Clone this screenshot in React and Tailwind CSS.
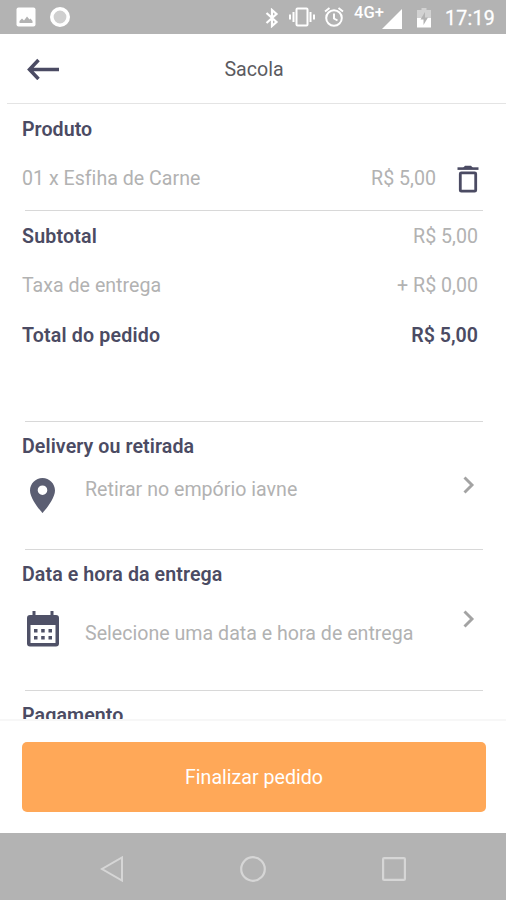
import React from 'react';

const StatusBar = () => (
  <div className="flex h-[34px] shrink-0 items-center justify-between bg-[#b3b3b3] pl-[16px] pr-[11px] text-white">
    <div className="flex items-center gap-[14px]">
      <svg className="h-5 w-5" viewBox="0 0 20 20">
        <rect x="0.5" y="0.5" width="19" height="19" rx="2" fill="#fff" />
        <path d="M3.500 16v-2l2.500-2.500 2 2 3-4 2.500 3 1-1 2 2.500v2z" fill="#b3b3b3" />
      </svg>
      <svg className="h-5 w-5" viewBox="0 0 20 20">
        <circle cx="10" cy="10" r="8.200" fill="#cfcfcf" stroke="#fff" strokeWidth="3.600" />
      </svg>
    </div>

    <div className="flex h-full items-center">
      {/* Bluetooth */}
      <svg className="mt-[2px] h-5 w-[14px]" viewBox="0 0 14 20" fill="none" stroke="#fff" strokeWidth="2.200">
        <path d="M1.500 5l10 9-4.500 4V2l4.500 4-10 9" />
      </svg>
      {/* Vibrate */}
      <svg className="ml-[10px] h-5 w-[26px]" viewBox="0 0 26 20" fill="none" stroke="#fff" strokeWidth="2">
        <rect x="7.500" y="1.500" width="11" height="17" rx="1" />
        <path d="M4.500 5v10M1 7.500v5M21.500 5v10M25 7.500v5" />
      </svg>
      {/* Alarm */}
      <svg className="ml-[9px] h-5 w-5" viewBox="0 0 20 20" fill="none" stroke="#fff" strokeWidth="2">
        <circle cx="10" cy="11" r="7.800" />
        <path d="M10 6.500v5l3.500 2M1 4.500L5.500 1M19 4.500L14.500 1" strokeWidth="1.900" />
      </svg>
      <span className="ml-[10px] w-[28px] self-start pt-[2.500px] text-[16.500px] font-medium leading-[20px]">4G+</span>
      {/* Signal */}
      <svg className="mt-[3px] h-5 w-5" viewBox="0 0 20 20">
        <path d="M20 0v20H0z" fill="#fff" />
      </svg>
      {/* Battery */}
      <svg className="ml-[15px] mt-[2px] h-5 w-[14px]" viewBox="0 0 14 20">
        <path d="M4.500 0h5v2H14v8H0V2h4.500z" fill="#d2d2d2" />
        <path d="M0 10h14v9.500H0z" fill="#fff" />
        <path d="M8 4l-4.500 7.500h3V17L11 9.500H8z" fill="#b3b3b3" />
      </svg>
      <span className="ml-[14px] mt-[3px] w-[50px] whitespace-nowrap text-[19.500px] tracking-[0.3px] [-webkit-text-stroke:0.3px_white]">
        17:19
      </span>
    </div>
  </div>
);

const Chevron = () => (
  <svg className="h-[18px] w-[12px]" viewBox="0 0 12 18" fill="none" stroke="#a3a3a3" strokeWidth="2.900">
    <path d="M1.500 1.500L9 9l-7.500 7.500" />
  </svg>
);

const Divider = () => <div className="ml-[25px] mr-[23px] h-px bg-[#d8d8d8]" />;

const Title = ({ children }) => (
  <h2 className="flex h-12 items-center px-[22px] pt-px font-semibold tracking-[0.09px] text-[#4b4b63]">{children}</h2>
);

const App = () => {
  return (
    <div className="flex h-[900px] w-[506px] flex-col overflow-hidden bg-white font-['Roboto',sans-serif] text-[19.600px] leading-[24px] tracking-[0.01px] text-[#b2b2b2] [font-variant-ligatures:none]">
      <StatusBar />

      <header className="grid h-[69px] shrink-0 grid-cols-[1fr_auto_1fr] items-center pl-[27px] pr-[25px] pt-px">
        <svg className="h-[22px] w-[32px]" viewBox="0 0 32 22" fill="none" stroke="#4b4b63" strokeWidth="3.500">
          <path d="M2.500 11.500H32M11.500 2L2.500 11.500l9 9.500" />
        </svg>
        <h1 className="pt-[2px] text-[#5b5b5f]">Sacola</h1>
      </header>
      <div className="ml-[7px] h-px shrink-0 bg-[#e4e4e4]" />

      <main className="h-[615px] shrink-0 overflow-hidden">
        <h2 className="flex h-[50px] items-center px-[22px] pt-px font-semibold tracking-[0.05px] text-[#4b4b63]">
          Produto
        </h2>
        <div className="flex h-[56px] items-center pb-[7px] pl-[22px] pr-[27px]">
          <span className="pt-px">01 x Esfiha de Carne</span>
          <span className="ml-auto pt-px">R$ 5,00</span>
          <svg className="ml-[21px] h-[28px] w-[22px]" viewBox="0 0 22 28" fill="none" stroke="#4b4b63">
            <path d="M0.500 3.600h21" strokeWidth="2.600" />
            <path d="M6 3L8 0.800h6L16 3z" fill="#4b4b63" stroke="none" />
            <rect x="3.300" y="7.800" width="15.400" height="18.400" rx="1" strokeWidth="2.800" />
          </svg>
        </div>
        <Divider />

        <div className="flex h-[50px] items-center justify-between pl-[22px] pr-[28px] pt-px">
          <span className="font-semibold tracking-[0.18px] text-[#4b4b63]">Subtotal</span>
          <span>R$ 5,00</span>
        </div>
        <div className="flex h-[49px] items-center justify-between pl-[22px] pr-[28px] pt-px">
          <span>Taxa de entrega</span>
          <span>+ R$ 0,00</span>
        </div>
        <div className="mb-[61px] flex h-[50px] items-center justify-between pl-[22px] pr-[28px] pt-px font-semibold text-[#4b4b63]">
          <span className="tracking-[0.18px]">Total do pedido</span>
          <span>R$ 5,00</span>
        </div>
        <Divider />

        <Title>Delivery ou retirada</Title>
        <div className="flex h-[79px] items-start pl-[30px] pr-[31px]">
          <svg className="mt-[8px] h-[35px] w-[25px]" viewBox="0 0 25 35">
            <path
              d="M12.500 0C5.600 0 0 5.600 0 12.500 0 21.500 12.500 35 12.500 35S25 21.500 25 12.500C25 5.600 19.400 0 12.500 0zm0 17a4.800 4.800 0 1 1 0-9.600 4.800 4.800 0 0 1 0 9.600z"
              fill="#5b5e72"
            />
          </svg>
          <span className="ml-[30px] mt-[8px]">Retirar no empório iavne</span>
          <div className="ml-auto mt-[6px]">
            <Chevron />
          </div>
        </div>
        <Divider />

        <Title>Data e hora da entrega</Title>
        <div className="flex h-[92px] items-start pl-[27px] pr-[31px]">
          <svg className="mt-[13px] h-[36px] w-[32px]" viewBox="0 0 32 36" fill="#4f5167">
            <path d="M5.500 0h3v4h15V0h3v4H29q3 0 3 3v25.500q0 3-3 3H3q-3 0-3-3V7q0-3 3-3h2.500zM3.500 14v18h25V14z" fillRule="evenodd" />
            <path d="M7 18h3.500v3.500H7zM14.200 18h3.500v3.500h-3.500zM21.500 18H25v3.500h-3.500zM7 25h3.500v3.500H7zM14.200 25h3.500v3.500h-3.500zM21.500 25H25v3.500h-3.500z" />
          </svg>
          <span className="ml-[26px] mt-[24px]">Selecione uma data e hora de entrega</span>
          <div className="ml-auto mt-[12px]">
            <Chevron />
          </div>
        </div>
        <Divider />

        <Title>Pagamento</Title>
      </main>

      <footer className="h-[114px] shrink-0 border-t-2 border-[#f7f7f7] px-[21px] pt-[21px]">
        <button className="ml-px h-[70px] w-[464px] rounded-[5px] bg-[#ffa858] pt-[2px] text-white">Finalizar pedido</button>
      </footer>

      <nav className="flex flex-1 items-center justify-between bg-[#b3b3b3] pl-[100px] pr-[100px] pt-[5px]">
        <svg className="h-[26px] w-[24px]" viewBox="0 0 24 26" fill="none" stroke="#d6d6d6" strokeWidth="2">
          <path d="M22 1.500v23L2 13z" />
        </svg>
        <svg className="h-[26px] w-[26px]" viewBox="0 0 26 26" fill="none" stroke="#d6d6d6" strokeWidth="2.200">
          <circle cx="13" cy="13" r="11.800" />
        </svg>
        <svg className="h-[24px] w-[24px]" viewBox="0 0 24 24" fill="none" stroke="#d6d6d6" strokeWidth="2.200">
          <rect x="1.100" y="1.100" width="21.800" height="21.800" rx="1" />
        </svg>
      </nav>
    </div>
  );
};

export default App;
